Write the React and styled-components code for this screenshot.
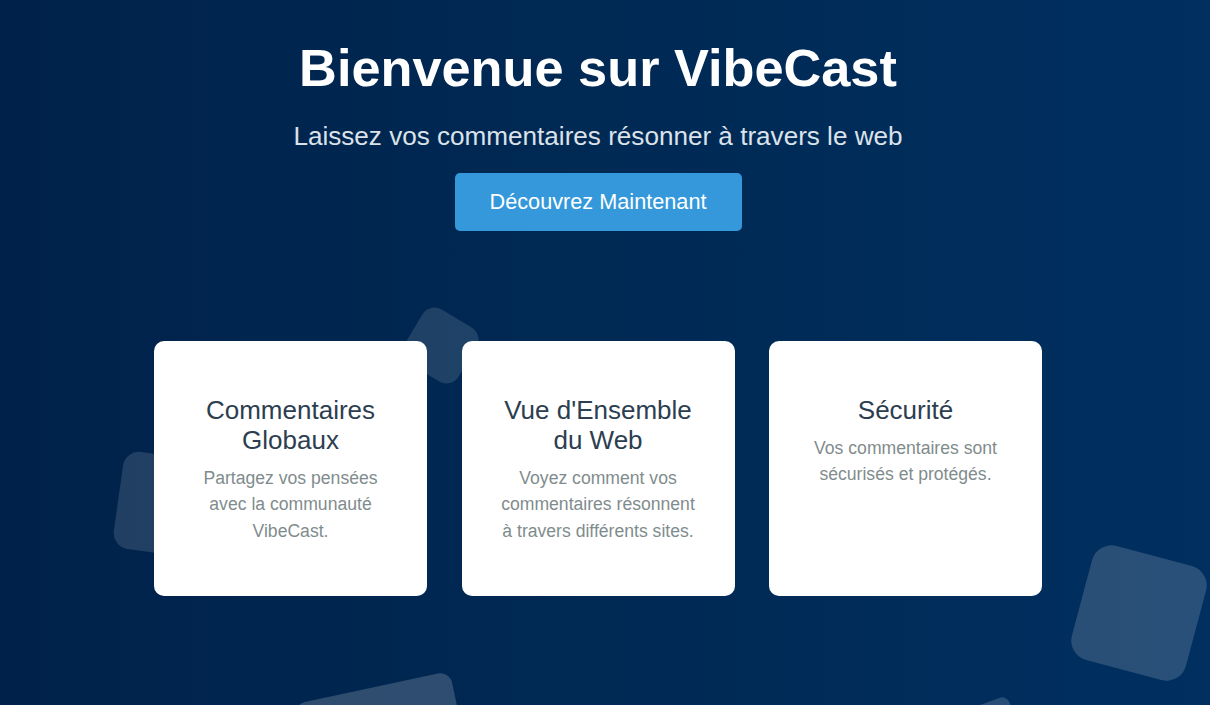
import styled, { createGlobalStyle } from "styled-components";

const GlobalStyle = createGlobalStyle`
  * { box-sizing: border-box; }
  html, body {
    margin: 0;
    padding: 0;
    font-family: "Liberation Sans", Arial, sans-serif;
  }
`;

const shapes = [
  { cx: 440, cy: 345, size: 63, rot: 31, alpha: 0.12, radius: 14 },
  { cx: 167, cy: 505, size: 98, rot: 8, alpha: 0.13, radius: 16 },
  { cx: 1139, cy: 613, size: 118, rot: 15, alpha: 0.16, radius: 20 },
  { cx: 388, cy: 766, size: 160, rot: -12, alpha: 0.18, radius: 12 },
  { cx: 986, cy: 740, size: 70, rot: -20, alpha: 0.16, radius: 8 },
];

const features = [
  {
    title: "Commentaires Globaux",
    text: "Partagez vos pensées avec la communauté VibeCast.",
  },
  {
    title: "Vue d'Ensemble du Web",
    text: "Voyez comment vos commentaires résonnent à travers différents sites.",
  },
  {
    title: "Sécurité",
    text: "Vos commentaires sont sécurisés et protégés.",
  },
];

export default function App() {
  return (
    <>
      <GlobalStyle />
      <Page>
        {shapes.map((s, i) => (
          <Shape
            key={i}
            $size={s.size}
            $rot={s.rot}
            $alpha={s.alpha}
            $radius={s.radius}
            style={{ left: s.cx - s.size / 2, top: s.cy - s.size / 2 }}
          />
        ))}
        <Content>
          <Hero>
            <Title>Bienvenue sur VibeCast</Title>
            <Subtitle>Laissez vos commentaires résonner à travers le web</Subtitle>
            <CtaButton>Découvrez Maintenant</CtaButton>
          </Hero>
          <Cards>
            {features.map((f) => (
              <Card key={f.title}>
                <CardTitle>{f.title}</CardTitle>
                <CardText>{f.text}</CardText>
              </Card>
            ))}
          </Cards>
        </Content>
      </Page>
    </>
  );
}

const Page = styled.div`
  position: relative;
  width: 100%;
  height: 705px;
  overflow: hidden;
  background: linear-gradient(to right, #00224a 0%, #002a55 55%, #002f60 100%);
`;

const Shape = styled.div`
  position: absolute;
  width: ${(p) => p.$size}px;
  height: ${(p) => p.$size}px;
  border-radius: ${(p) => p.$radius}px;
  background: rgba(255, 255, 255, ${(p) => p.$alpha});
  transform: rotate(${(p) => p.$rot}deg);
  z-index: 0;
`;

const Content = styled.main`
  position: relative;
  z-index: 1;
  display: flex;
  flex-direction: column;
  align-items: center;
  padding: 38px 14px 0 0;
`;

const Hero = styled.section`
  display: flex;
  flex-direction: column;
  align-items: center;
  text-align: center;
`;

const Title = styled.h1`
  margin: 0;
  font-size: 52.3px;
  font-weight: 700;
  line-height: 60px;
  color: #ffffff;
`;

const Subtitle = styled.p`
  margin: 23px 0 0;
  font-size: 26.1px;
  line-height: 30px;
  color: #dce2ea;
`;

const CtaButton = styled.button`
  margin-top: 22px;
  padding: 0 35px;
  height: 58px;
  border: none;
  border-radius: 5px;
  background: #3498db;
  color: #ffffff;
  font-family: "Liberation Sans", Arial, sans-serif;
  font-size: 21.7px;
  cursor: pointer;
`;

const Cards = styled.section`
  margin-top: 110px;
  display: grid;
  grid-template-columns: repeat(3, 273px);
  column-gap: 34.5px;
`;

const Card = styled.article`
  background: #ffffff;
  border-radius: 10px;
  padding: 54px 35px 52px;
  text-align: center;
`;

const CardTitle = styled.h3`
  margin: 0;
  font-size: 26px;
  font-weight: 400;
  line-height: 30px;
  color: #2c3e50;
`;

const CardText = styled.p`
  margin: 10px 0 0;
  font-size: 17.6px;
  line-height: 26.4px;
  color: #7f8c8d;
`;
